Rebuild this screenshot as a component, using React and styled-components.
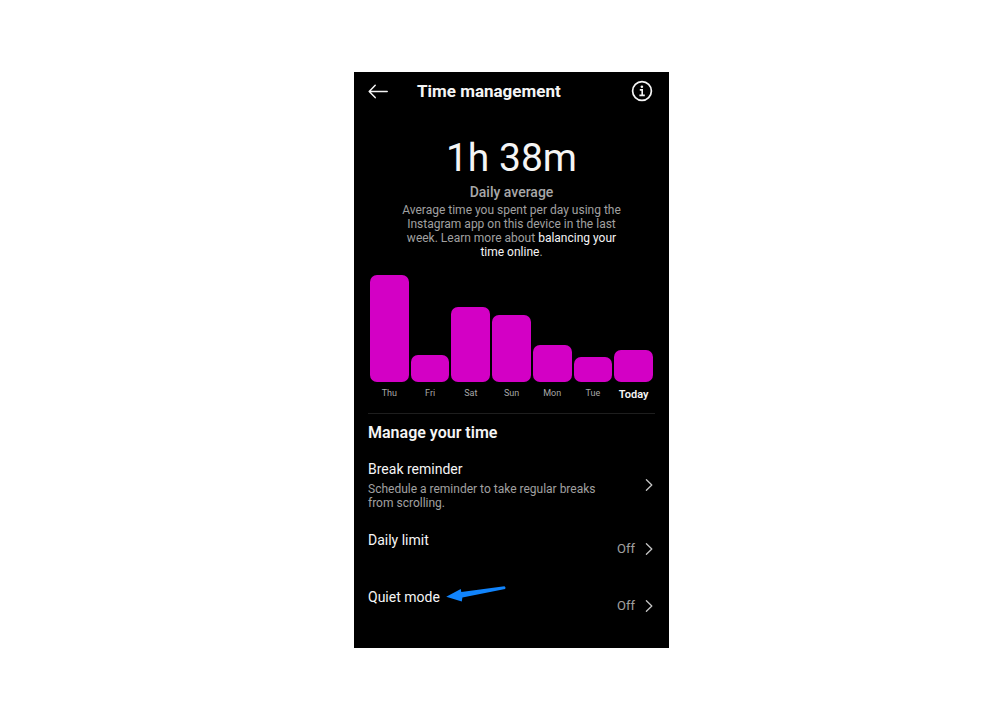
import React from 'react';
import styled, { createGlobalStyle } from 'styled-components';

const usage = [
  { day: 'Thu', height: 107 },
  { day: 'Fri', height: 27 },
  { day: 'Sat', height: 75 },
  { day: 'Sun', height: 67 },
  { day: 'Mon', height: 37 },
  { day: 'Tue', height: 25 },
  { day: 'Today', height: 32, today: true },
];

const settings = [
  {
    title: 'Break reminder',
    detail: 'Schedule a reminder to take regular breaks from scrolling.',
  },
  { title: 'Daily limit', value: 'Off' },
  { title: 'Quiet mode', value: 'Off', pointed: true },
];

function App() {
  return (
    <Page>
      <GlobalStyle />
      <Screen>
        <Header>
          <IconButton type="button" aria-label="Back">
            <svg width="20" height="16" viewBox="0 0 20 16" fill="none" stroke="currentColor" strokeWidth="1.5" strokeLinecap="round" strokeLinejoin="round">
              <path d="M7.2 2.2 1.2 8.4l6 6.2M1.2 8.4h18" />
            </svg>
          </IconButton>
          <Title>Time management</Title>
          <IconButton type="button" aria-label="Information">
            <svg width="22" height="22" viewBox="0 0 22 22" fill="none" stroke="currentColor">
              <circle cx="11" cy="11" r="9.4" strokeWidth="1.7" />
              <circle cx="10.9" cy="6.8" r="1.3" fill="currentColor" stroke="none" />
              <path d="M8.8 9.9h2.4v5.3M8.4 15.4h5.4" strokeWidth="1.6" />
            </svg>
          </IconButton>
        </Header>

        <Summary>
          <Average>1h 38m</Average>
          <AverageLabel>Daily average</AverageLabel>
          <Description>
            Average time you spent per day using the Instagram app on this device in the last week.
            Learn more about <StyledLink href="#balance">balancing your time online</StyledLink>.
          </Description>
        </Summary>

        <Chart>
          {usage.map((item) => (
            <Day key={item.day}>
              <Bar style={{ height: item.height }} />
              <DayLabel $today={item.today}>{item.day}</DayLabel>
            </Day>
          ))}
        </Chart>

        <Manage>
          <SectionTitle>Manage your time</SectionTitle>
          <List>
            {settings.map((item) => (
              <li key={item.title}>
                <Row type="button">
                  <RowText>
                    <RowTitle>
                      {item.title}
                      {item.pointed && <Pointer />}
                    </RowTitle>
                    {item.detail && <RowDetail>{item.detail}</RowDetail>}
                  </RowText>
                  <RowValue>
                    {item.value}
                    <Chevron />
                  </RowValue>
                </Row>
              </li>
            ))}
          </List>
        </Manage>
      </Screen>
    </Page>
  );
}

const Chevron = () => (
  <svg width="8" height="14" viewBox="0 0 8 14" fill="none" stroke="#c4c4c4" strokeWidth="1.3" strokeLinecap="round" strokeLinejoin="round" aria-hidden="true">
    <path d="M1.4 1.8 6.8 7l-5.4 5.2" />
  </svg>
);

const Pointer = () => (
  <StyledPointer width="60" height="16" viewBox="0 0 60 16" fill="#1184fc" aria-hidden="true">
    <path d="M.2 10.8 14.8 3l.5 3L58.4.2q1.8.9.7 2.8L16.4 11.4l-.6 4.2Z" />
  </StyledPointer>
);

export default App;

const GlobalStyle = createGlobalStyle`
  body {
    margin: 0;
    background: #fff;
    font-family: Roboto, "Liberation Sans", sans-serif;
  }

  *, *::before, *::after {
    box-sizing: border-box;
  }
`

const Page = styled.div`
  display: flex;
  justify-content: center;
  padding: 72px 0 72px 23px;
`

const Screen = styled.main`
  width: 100%;
  max-width: 315px;
  padding: 0 14px 24px;
  background: #000;
  color: #f5f5f5;
`

const Header = styled.header`
  display: flex;
  align-items: center;
  height: 37px;
  padding-right: 2px;
`

const IconButton = styled.button`
  display: flex;
  padding: 0;
  border: 0;
  background: none;
  color: inherit;
  cursor: pointer;
`

const Title = styled.h1`
  flex: 1;
  margin: 0 0 0 29px;
  font-size: 17px;
  font-weight: 700;
  line-height: 20px;
`

const Summary = styled.section`
  display: flex;
  flex-direction: column;
  align-items: center;
  padding-top: 25px;
  text-align: center;
`

const Average = styled.div`
  font-size: 39px;
  line-height: 48px;
`

const AverageLabel = styled.div`
  margin-top: 1px;
  color: #a8a8a8;
  font-size: 14px;
  font-weight: 500;
  line-height: 18px;
`

const Description = styled.p`
  max-width: 232px;
  margin: 2px 0 0;
  color: #a0a0a0;
  font-size: 12px;
  line-height: 14px;
`

const StyledLink = styled.a`
  color: #f5f5f5;
  text-decoration: none;
`

const Chart = styled.section`
  display: flex;
  align-items: flex-end;
  gap: 2px;
  padding: 16px 2px 11px;
  border-bottom: 1px solid #1e1e1e;
`

const Day = styled.div`
  display: flex;
  flex: 1;
  flex-direction: column;
  align-items: center;
  min-width: 0;
`

const Bar = styled.div`
  width: 100%;
  border-radius: 7px;
  background: #d300c5;
`

const DayLabel = styled.span`
  height: 20px;
  padding-top: ${(props) => (props.$today ? '5px' : '3px')};
  color: ${(props) => (props.$today ? '#f5f5f5' : '#a8a8a8')};
  font-size: ${(props) => (props.$today ? '11px' : '9px')};
  font-weight: ${(props) => (props.$today ? 600 : 400)};
  line-height: 16px;
`

const Manage = styled.section`
  padding-top: 9px;
`

const SectionTitle = styled.h2`
  margin: 0;
  font-size: 16px;
  font-weight: 600;
  line-height: 20px;
`

const List = styled.ul`
  display: flex;
  flex-direction: column;
  gap: 21px;
  margin: 17px 0 0;
  padding: 0;
  list-style: none;
`

const Row = styled.button`
  display: flex;
  align-items: center;
  justify-content: space-between;
  width: 100%;
  min-height: 36px;
  padding: 0 2px 0 0;
  border: 0;
  background: none;
  color: inherit;
  font-family: inherit;
  text-align: left;
  cursor: pointer;
`

const RowText = styled.span`
  display: flex;
  flex-direction: column;
  align-self: flex-start;
  align-items: flex-start;
  gap: 4px;
  max-width: 244px;
`

const RowTitle = styled.span`
  position: relative;
  font-size: 14px;
  line-height: 18px;
`

const StyledPointer = styled.svg`
  position: absolute;
  top: -2px;
  left: 100%;
  margin-left: 6px;
`

const RowDetail = styled.span`
  color: #a0a0a0;
  font-size: 12px;
  line-height: 14px;
`

const RowValue = styled.span`
  display: flex;
  align-items: center;
  gap: 10px;
  color: #a0a0a0;
  font-size: 13px;
  line-height: 16px;
`
